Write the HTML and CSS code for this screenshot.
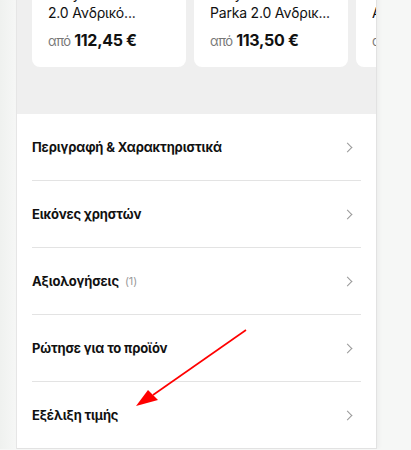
FILE: index.html
```
<!DOCTYPE html>
<html lang="el">
<head>
  <meta charset="UTF-8" />
  <meta name="viewport" content="width=device-width, initial-scale=1.0" />
  <title>Helly Hansen Dubliner Parka 2.0</title>
  <link rel="stylesheet" href="styles.css">
</head>
<body>
  <div class="page">
    <div class="related">
      <div class="cards">
        <a class="card" href="#">
          <div class="card-title">Helly Hansen Dubliner<br>2.0 Ανδρικό...</div>
          <div class="card-price"><span class="from">από</span> 112,45 €</div>
        </a>
        <a class="card" href="#">
          <div class="card-title">Helly Hansen Dubliner<br>Parka 2.0 Ανδρικ...</div>
          <div class="card-price"><span class="from">από</span> 113,50 €</div>
        </a>
        <a class="card" href="#">
          <div class="card-title">Helly Hansen Dubliner<br>Ανδρικό Μπουφάν...</div>
          <div class="card-price"><span class="from">από</span> 98,90 €</div>
        </a>
      </div>
    </div>

    <ul class="sections">
      <li><a href="#">Περιγραφή &amp; Χαρακτηριστικά</a></li>
      <li><a href="#">Εικόνες χρηστών</a></li>
      <li><a href="#">Αξιολογήσεις <span class="count">(1)</span></a></li>
      <li><a href="#">Ρώτησε για το προϊόν</a></li>
      <li><a href="#">Εξέλιξη τιμής</a></li>
    </ul>

    <svg class="arrow" width="130" height="90" viewBox="0 0 130 90">
      <line x1="115" y1="2" x2="22" y2="67" stroke="#f00" stroke-width="1.6" />
      <polygon points="5,78 17,62 27,72" fill="#f00" />
    </svg>
  </div>
</body>
</html>
```

FILE: styles.css
```
body {
  margin: 0;
  font-family: Inter, "Noto Sans", sans-serif;
  background: linear-gradient(90deg, #eff1ef 0, #f6f7f6 16px) no-repeat, #f6f7f6;
  color: #111;
  overflow: hidden;
}
a {
  color: inherit;
  text-decoration: none;
}
.page {
  position: relative;
  width: 359px;
  margin-left: 16px;
  border-left: 1px solid #e6e6e6;
  border-right: 1px solid #e2e2e2;
  box-shadow: 2px 0 4px rgba(0, 0, 0, 0.04);
  margin-top: -32px;
}
.related {
  background: #efefef;
  padding: 0 0 47px 15px;
  overflow: hidden;
}
.cards {
  display: flex;
  gap: 8px;
}
.card {
  flex: 0 0 154px;
  min-width: 0;
  overflow: hidden;
  background: #fff;
  border-radius: 0 0 8px 8px;
  padding: 16px;
  box-sizing: border-box;
}
.card-title {
  font-size: 14px;
  line-height: 19px;
  letter-spacing: -0.2px;
  white-space: nowrap;
  overflow: hidden;
}
.card-price {
  margin-top: 8px;
  font-size: 16px;
  line-height: 20px;
  font-weight: 700;
  letter-spacing: -0.3px;
  white-space: nowrap;
}
.from {
  font-size: 13px;
  font-weight: 400;
  color: #777;
  letter-spacing: -0.5px;
}
.sections {
  list-style: none;
  margin: 0;
  padding: 0 15px 0 15px;
  background: #fff;
  border-bottom: 1px solid #e2e2e2;
}
.sections li + li {
  border-top: 1px solid #e3e3e3;
}
.sections a {
  display: flex;
  align-items: center;
  height: 66px;
  font-size: 13px;
  font-weight: 700;
  letter-spacing: -0.15px;
  color: #111;
}
.sections a::after {
  content: "";
  margin-left: auto;
  margin-right: 10px;
  width: 6px;
  height: 6px;
  border-top: 1.2px solid #999;
  border-right: 1.2px solid #999;
  transform: rotate(45deg);
}
.count {
  font-weight: 400;
  font-size: 11px;
  color: #999;
  margin-left: 6px;
}
.arrow {
  position: absolute;
  left: 114px;
  top: 360px;
}
```
